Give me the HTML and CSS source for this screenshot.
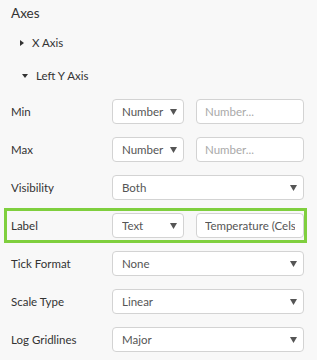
FILE: index.html
```html
<!DOCTYPE html>
<html lang="en">
<head>
  <meta charset="UTF-8">
  <title>Axes</title>
  <link rel="stylesheet" href="styles.css">
</head>
<body>
  <div class="panel">
    <h2 class="title">Axes</h2>
    <div class="group collapsed"><span class="caret right"></span>X Axis</div>
    <div class="group open"><span class="caret down"></span>Left Y Axis</div>

    <div class="rows">
      <div class="row">
        <label class="name">Min</label>
        <div class="select small">
          <select><option>Number</option></select>
          <svg class="arrow" width="7" height="6" viewBox="0 0 7 6"><path d="M0 0H7L3.5 6Z"/></svg>
        </div>
        <input class="field" type="text" placeholder="Number...">
      </div>
      <div class="row">
        <label class="name">Max</label>
        <div class="select small">
          <select><option>Number</option></select>
          <svg class="arrow" width="7" height="6" viewBox="0 0 7 6"><path d="M0 0H7L3.5 6Z"/></svg>
        </div>
        <input class="field" type="text" placeholder="Number...">
      </div>
      <div class="row">
        <label class="name">Visibility</label>
        <div class="select wide">
          <select><option>Both</option></select>
          <svg class="arrow" width="7" height="6" viewBox="0 0 7 6"><path d="M0 0H7L3.5 6Z"/></svg>
        </div>
      </div>
      <div class="row highlight">
        <label class="name">Label</label>
        <div class="select small">
          <select><option>Text</option></select>
          <svg class="arrow" width="7" height="6" viewBox="0 0 7 6"><path d="M0 0H7L3.5 6Z"/></svg>
        </div>
        <input class="field" type="text" value="Temperature (Celsius)">
      </div>
      <div class="row">
        <label class="name">Tick Format</label>
        <div class="select wide">
          <select><option>None</option></select>
          <svg class="arrow" width="7" height="6" viewBox="0 0 7 6"><path d="M0 0H7L3.5 6Z"/></svg>
        </div>
      </div>
      <div class="row">
        <label class="name">Scale Type</label>
        <div class="select wide">
          <select><option>Linear</option></select>
          <svg class="arrow" width="7" height="6" viewBox="0 0 7 6"><path d="M0 0H7L3.5 6Z"/></svg>
        </div>
      </div>
      <div class="row">
        <label class="name">Log Gridlines</label>
        <div class="select wide">
          <select><option>Major</option></select>
          <svg class="arrow" width="7" height="6" viewBox="0 0 7 6"><path d="M0 0H7L3.5 6Z"/></svg>
        </div>
      </div>
    </div>
  </div>
</body>
</html>
```

FILE: styles.css
```css
body { margin: 0; background: #f8f8f8; color: #333; font-family: 'Lato', 'Noto Sans', sans-serif; font-size: 11.5px; }
.panel { padding: 0 10px 0 4px; }

.title { margin: 0; padding: 4px 0 0 7px; font-size: 13.5px; font-weight: normal; line-height: 18px; color: #333; }

.group { display: flex; align-items: center; height: 33px; padding-left: 16px; }
.group.collapsed { margin-top: 4px; }
.caret { display: inline-block; width: 0; height: 0; margin-right: 8px; }
.caret.right { border-top: 3px solid transparent; border-bottom: 3px solid transparent; border-left: 4px solid #333; }
.caret.down { margin-left: 2px; border-left: 3px solid transparent; border-right: 3px solid transparent; border-top: 4px solid #333; }

.rows { display: flex; flex-direction: column; gap: 3px; margin-top: 2px; }
.row { display: flex; align-items: center; gap: 12px; padding: 2px 0 2px 4px; border: 3px solid transparent; }
.row.highlight { border-color: #7fcf3e; }
.name { width: 89px; flex: none; }

.select { position: relative; height: 25px; box-sizing: border-box; }
.select.small { width: 72px; flex: none; }
.select.wide { flex: 1; }
.select select {
  -webkit-appearance: none; appearance: none; width: 100%; height: 25px; box-sizing: border-box;
  padding: 0 18px 0 9px; border: 1px solid #d3d3d3; border-radius: 4px; background: #fff;
  font: inherit; color: #555;
}
.arrow { position: absolute; right: 7px; top: 10px; fill: #555; pointer-events: none; }

.field {
  flex: 1; min-width: 0; height: 25px; box-sizing: border-box; padding: 0 8px;
  border: 1px solid #d3d3d3; border-radius: 4px; background: #fff; font: inherit; color: #555;
}
.field::placeholder { color: #a9a9a9; }
```
